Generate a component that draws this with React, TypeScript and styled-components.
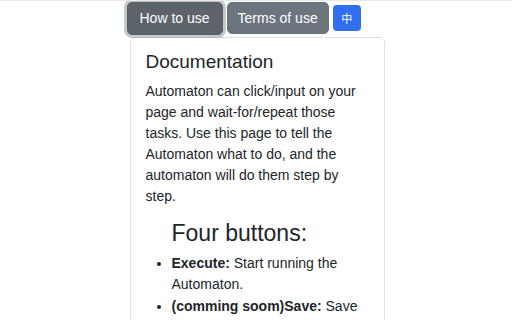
import React from "react";
import styled, { createGlobalStyle } from "styled-components";

const Global = createGlobalStyle`
  html, body { margin: 0; padding: 0; background: #fff; }
  body {
    font-family: "Liberation Sans", Arial, sans-serif;
    color: #212529;
    -webkit-font-smoothing: antialiased;
  }
`;

const Page = styled.div`
  border-top: 1px solid #e8e8e8;
  padding-left: 2px;
  height: 319px;
  overflow: hidden;
`;

const Container = styled.div`
  width: 255px;
  margin: 0 auto;
`;

const Toolbar = styled.div`
  display: flex;
  align-items: center;
  gap: 4px;
  height: 34px;
  margin-left: -3px;
`;

const Button = styled.button<{ $active?: boolean }>`
  font-family: "Liberation Sans", Arial, sans-serif;
  font-size: 14px;
  color: #fff;
  height: ${(p) => (p.$active ? 33 : 32)}px;
  padding: 0 ${(p) => (p.$active ? 12 : 10)}px;
  border-radius: 5px;
  border: 1px solid ${(p) => (p.$active ? "#565e64" : "#6c757d")};
  background: ${(p) => (p.$active ? "#5c636a" : "#6c757d")};
  box-shadow: ${(p) => (p.$active ? "0 0 0 3px rgba(130,138,145,0.45)" : "none")};
  cursor: pointer;
`;

const LangButton = styled.button`
  font-family: "Noto Sans CJK SC", sans-serif;
  font-size: 11px;
  color: #fff;
  width: 28px;
  height: 26px;
  padding: 0;
  border: none;
  border-radius: 4px;
  background: #2f6ff0;
`;

const Card = styled.div`
  margin-top: 2px;
  border: 1px solid #e0e0e0;
  border-radius: 5px;
  padding: 12px 15px;
`;

const Title = styled.h3`
  font-size: 19px;
  font-weight: 400;
  line-height: 23px;
  margin: 0 0 8px;
`;

const Text = styled.p`
  font-size: 14px;
  line-height: 21px;
  margin: 0;
`;

const Section = styled.div`
  padding-left: 26px;
  margin-top: 12px;
`;

const SubTitle = styled.h3`
  font-size: 23px;
  font-weight: 400;
  line-height: 28px;
  margin: 0 0 6px;
`;

const List = styled.ul`
  margin: 0;
  padding: 0;
  font-size: 14px;
  line-height: 21px;
`;

const Item = styled.li`
  margin-bottom: 1px;
`;

export default function App() {
  return (
    <>
      <Global />
      <Page>
        <Container>
          <Toolbar>
            <Button $active>How to use</Button>
            <Button>Terms of use</Button>
            <LangButton>中</LangButton>
          </Toolbar>
          <Card>
            <Title>Documentation</Title>
            <Text>
              Automaton can click/input on your page and wait-for/repeat those
              tasks. Use this page to tell the Automaton what to do, and the
              automaton will do them step by step.
            </Text>
            <Section>
              <SubTitle>Four buttons:</SubTitle>
              <List>
                <Item>
                  <b>Execute:</b> Start running the Automaton.
                </Item>
                <Item>
                  <b>(comming soom)Save:</b> Save the Automaton.
                </Item>
              </List>
            </Section>
          </Card>
        </Container>
      </Page>
    </>
  );
}
